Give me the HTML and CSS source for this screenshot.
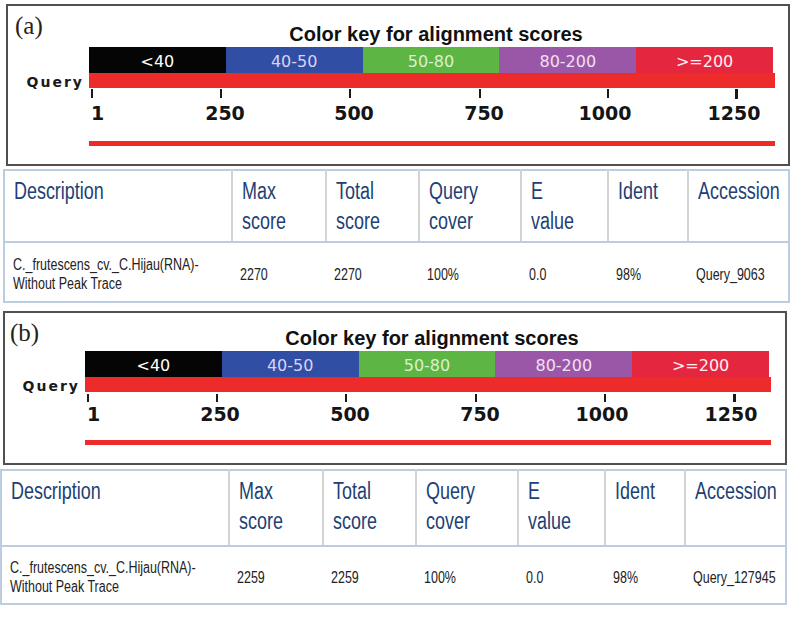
FILE: index.html
```html
<!DOCTYPE html>
<html>
<head>
<meta charset="utf-8">
<link rel="stylesheet" href="styles.css">
</head>
<body>
<div class="page">
  <section class="fig fig-a">
    <div class="panel">
      <span class="tag">(a)</span>
      <span class="title">Color key for alignment scores</span>
      <span></span>
      <div class="key">
        <span class="seg s1">&lt;40</span>
        <span class="seg s2">40-50</span>
        <span class="seg s3">50-80</span>
        <span class="seg s4">80-200</span>
        <span class="seg s5">&gt;=200</span>
      </div>
      <span class="qlabel">Query</span>
      <div class="qbar"></div>
      <span></span>
      <div class="axis">
        <i class="tick" style="left:2px"></i>
        <i class="tick" style="left:131px"></i>
        <i class="tick" style="left:260px"></i>
        <i class="tick" style="left:390px"></i>
        <i class="tick" style="left:518px"></i>
        <i class="tick tick-strong" style="left:646px"></i>
        <span class="num first" style="left:2px">1</span>
        <span class="num" style="left:136px">250</span>
        <span class="num" style="left:265px">500</span>
        <span class="num" style="left:395px">750</span>
        <span class="num" style="left:516px">1000</span>
        <span class="num" style="left:645px">1250</span>
      </div>
      <span></span>
      <div class="hline"></div>
    </div>
    <table class="hits">
      <colgroup>
        <col class="c-desc"><col class="c-max"><col class="c-tot"><col class="c-cov"><col class="c-e"><col class="c-id"><col class="c-acc">
      </colgroup>
      <thead>
        <tr>
          <th><span class="nar">Description</span></th>
          <th><span class="nar">Max<br>score</span></th>
          <th><span class="nar">Total<br>score</span></th>
          <th><span class="nar">Query<br>cover</span></th>
          <th><span class="nar">E<br>value</span></th>
          <th><span class="nar">Ident</span></th>
          <th><span class="nar">Accession</span></th>
        </tr>
      </thead>
      <tbody>
        <tr>
          <td><span class="nar">C._frutescens_cv._C.Hijau(RNA)-<br>Without Peak Trace</span></td>
          <td><span class="nar">2270</span></td>
          <td><span class="nar">2270</span></td>
          <td><span class="nar">100%</span></td>
          <td><span class="nar">0.0</span></td>
          <td><span class="nar">98%</span></td>
          <td><span class="nar">Query_9063</span></td>
        </tr>
      </tbody>
    </table>
  </section>

  <section class="fig fig-b">
    <div class="panel">
      <span class="tag">(b)</span>
      <span class="title">Color key for alignment scores</span>
      <span></span>
      <div class="key">
        <span class="seg s1">&lt;40</span>
        <span class="seg s2">40-50</span>
        <span class="seg s3">50-80</span>
        <span class="seg s4">80-200</span>
        <span class="seg s5">&gt;=200</span>
      </div>
      <span class="qlabel">Query</span>
      <div class="qbar"></div>
      <span></span>
      <div class="axis">
        <i class="tick" style="left:2px"></i>
        <i class="tick" style="left:131px"></i>
        <i class="tick" style="left:260px"></i>
        <i class="tick" style="left:390px"></i>
        <i class="tick" style="left:519px"></i>
        <i class="tick tick-strong" style="left:648px"></i>
        <span class="num first" style="left:2px">1</span>
        <span class="num" style="left:135px">250</span>
        <span class="num" style="left:265px">500</span>
        <span class="num" style="left:395px">750</span>
        <span class="num" style="left:517px">1000</span>
        <span class="num" style="left:646px">1250</span>
      </div>
      <span></span>
      <div class="hline"></div>
    </div>
    <table class="hits">
      <colgroup>
        <col class="c-desc"><col class="c-max"><col class="c-tot"><col class="c-cov"><col class="c-e"><col class="c-id"><col class="c-acc">
      </colgroup>
      <thead>
        <tr>
          <th><span class="nar">Description</span></th>
          <th><span class="nar">Max<br>score</span></th>
          <th><span class="nar">Total<br>score</span></th>
          <th><span class="nar">Query<br>cover</span></th>
          <th><span class="nar">E<br>value</span></th>
          <th><span class="nar">Ident</span></th>
          <th><span class="nar">Accession</span></th>
        </tr>
      </thead>
      <tbody>
        <tr>
          <td><span class="nar">C._frutescens_cv._C.Hijau(RNA)-<br>Without Peak Trace</span></td>
          <td><span class="nar">2259</span></td>
          <td><span class="nar">2259</span></td>
          <td><span class="nar">100%</span></td>
          <td><span class="nar">0.0</span></td>
          <td><span class="nar">98%</span></td>
          <td><span class="nar">Query_127945</span></td>
        </tr>
      </tbody>
    </table>
  </section>
</div>
</body>
</html>
```

FILE: styles.css
```css
html, body {
  margin: 0;
  padding: 0;
  background: #ffffff;
}

.page {
  width: 800px;
  height: 618px;
  overflow: hidden;
  display: flex;
  flex-direction: column;
}

.fig {
  display: flex;
  flex-direction: column;
}

.fig-a {
  padding: 4px 0 0 0;
}

.fig-b {
  padding: 8px 0 0 0;
}

/* ---------- colour-key panel ---------- */
.panel {
  display: grid;
  border: 2px solid #505050;
  width: 780px;
  box-sizing: content-box;
}

.fig-a .panel {
  margin-left: 6px;
  height: 158px;
  grid-template-columns: 81px 686px;
  grid-template-rows: 41px 26px 15px 53px 5px;
}

.fig-b .panel {
  margin-left: 3px;
  height: 150px;
  grid-template-columns: 80px 686px;
  grid-template-rows: 38px 26px 15px 48px 5px;
}

.tag {
  font-family: "Liberation Serif", "Times New Roman", serif;
  font-size: 25px;
  line-height: 25px;
  color: #2a2218;
  padding-top: 7px;
  padding-left: 7px;
}

.fig-b .tag {
  padding-left: 5px;
}

.title {
  font-family: "Liberation Sans", Arial, sans-serif;
  font-weight: bold;
  font-size: 20px;
  line-height: 20px;
  color: #111111;
  text-align: center;
  padding-top: 18px;
  padding-left: 8px;
}

.fig-b .title {
  padding-top: 15px;
}

.key {
  display: flex;
  width: calc(100% - 2px);
  height: 26px;
}

.seg {
  flex: 1;
  text-align: center;
  font-family: "DejaVu Sans", sans-serif;
  font-size: 16px;
  line-height: 23px;
  padding-top: 3px;
}

.s1 { background: #050505; color: #ffffff; }
.s2 { background: #2f4ea4; color: #dcd2f6; }
.s3 { background: #5db544; color: #dcf0cf; }
.s4 { background: #9a57a7; color: #f0e0f2; }
.s5 { background: #e5263f; color: #fff0f4; }

.qlabel {
  font-family: "DejaVu Sans", sans-serif;
  font-weight: bold;
  font-size: 14px;
  line-height: 15px;
  letter-spacing: 2px;
  color: #1a1a1a;
  text-align: right;
  padding-right: 5px;
  padding-top: 2px;
  white-space: nowrap;
}

.qbar {
  background: #ee2b2b;
  height: 15px;
}

.axis {
  position: relative;
}

.tick {
  position: absolute;
  top: 1px;
  width: 2px;
  height: 9px;
  background: #1a1a1a;
}

.tick-strong {
  width: 3px;
  height: 10px;
}

.fig-b .tick {
  top: 2px;
  height: 8px;
}

.num {
  position: absolute;
  top: 16px;
  transform: translateX(-50%);
  font-family: "DejaVu Sans", sans-serif;
  font-weight: bold;
  font-size: 19px;
  line-height: 19px;
  color: #151515;
}

.fig-b .num {
  top: 13px;
}

.num.first {
  transform: none;
}

.hline {
  background: #ee2b2b;
  height: 5px;
}

/* ---------- hits table ---------- */
.hits {
  border-collapse: collapse;
  table-layout: fixed;
  border: 2px solid #bccde0;
  font-family: "Liberation Sans", Arial, sans-serif;
}

.fig-a .hits {
  margin: 3px 0 0 3px;
  width: 785px;
}

.fig-b .hits {
  margin: 4px 0 0 0;
  width: 787px;
}

.c-desc { width: 228px; }
.c-max { width: 94px; }
.c-tot { width: 93px; }
.c-cov { width: 102px; }
.c-e { width: 87px; }
.c-id { width: 80px; }
.c-acc { width: 101px; }

.nar {
  display: inline-block;
  white-space: nowrap;
  transform-origin: left center;
}

.hits th {
  text-align: left;
  vertical-align: top;
  font-weight: normal;
  font-size: 23px;
  line-height: 30px;
  color: #213f74;
  padding: 5px 0 0 9px;
  border-right: 2px solid #d3d3d3;
  border-bottom: 2px solid #bccde0;
  height: 65px;
  overflow: visible;
}

.hits th .nar {
  transform: scaleX(0.78);
}

.fig-b .hits th {
  height: 69px;
}

.hits th:last-child {
  border-right: 2px solid #bccde0;
}

.hits td {
  font-size: 16px;
  line-height: 19px;
  color: #222222;
  padding: 4px 0 0 8px;
  vertical-align: middle;
  height: 54px;
  overflow: visible;
}

.hits td .nar {
  transform: scaleX(0.78);
}

.fig-b .hits td {
  height: 52px;
}
```
